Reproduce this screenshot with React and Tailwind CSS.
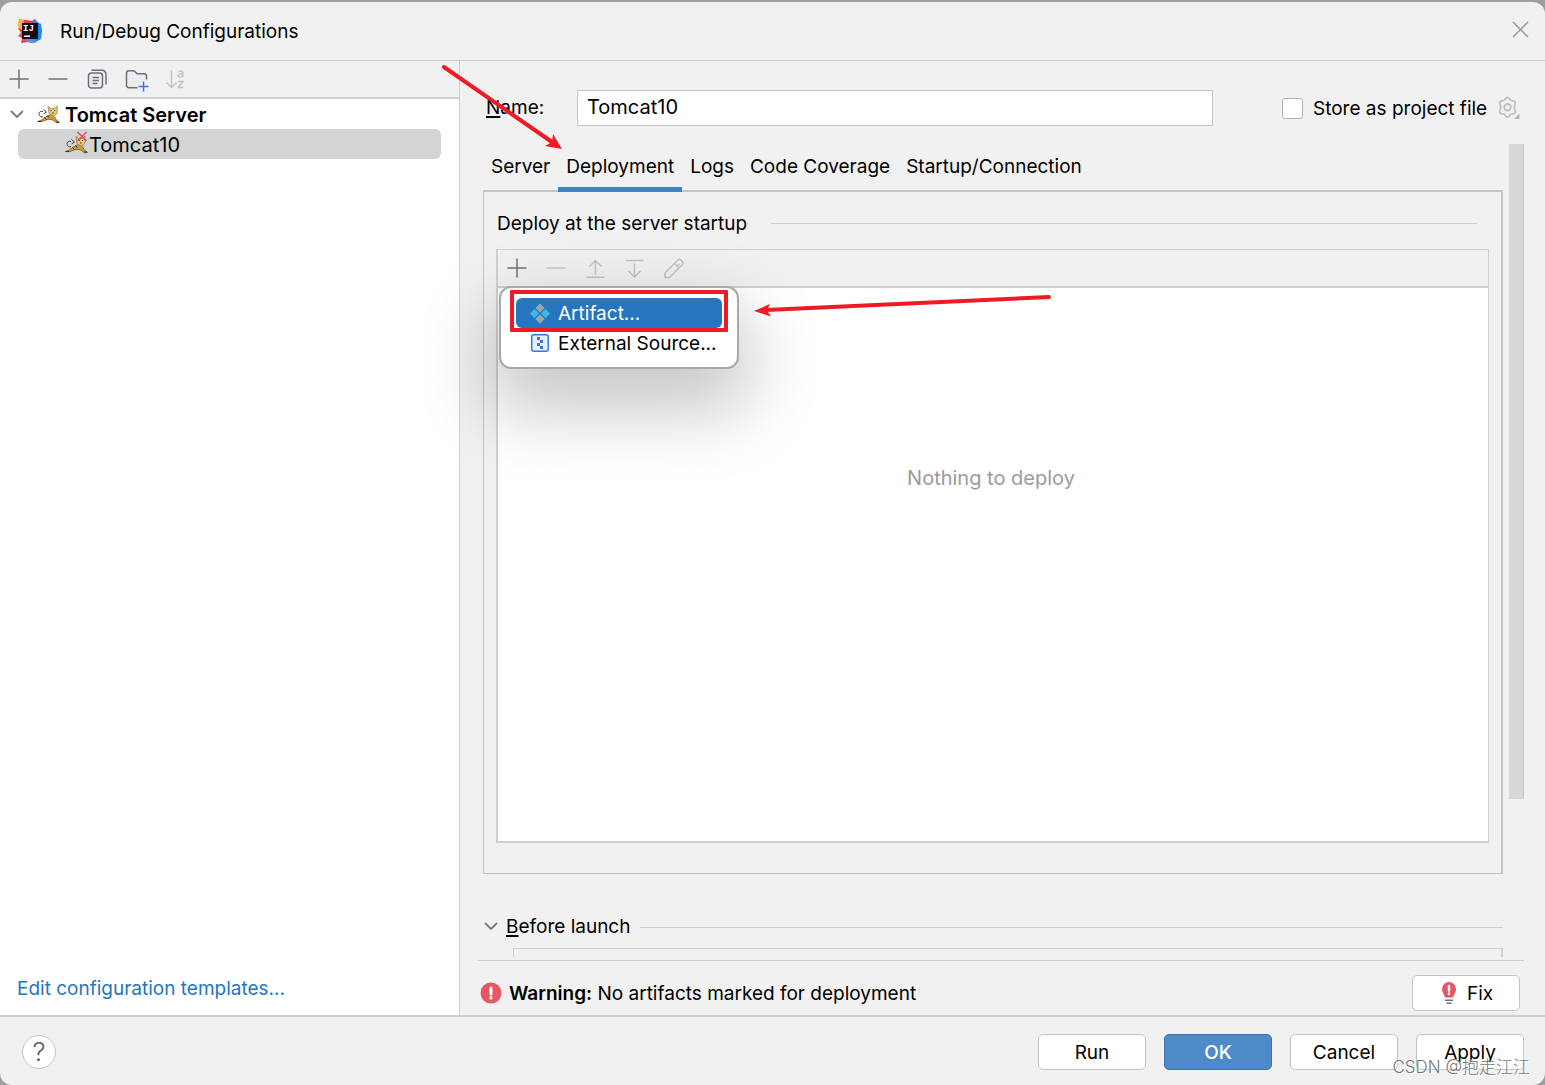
import React, { useState } from 'react'

function Icon({ children, className = '' }) {
  return (
    <svg width="24" height="24" viewBox="0 0 24 24" fill="none" stroke="currentColor" strokeWidth="1.5" className={`shrink-0 ${className}`} aria-hidden="true">
      {children}
    </svg>
  )
}

function PlusIcon() {
  return <Icon><path d="M12 2.5v19M2.5 12h19" /></Icon>
}

function MinusIcon() {
  return <Icon><path d="M2.5 12h19" /></Icon>
}

function CopyIcon() {
  return (
    <Icon>
      <rect x="3.5" y="6" width="14" height="15" rx="3" fill="#ebecf0" />
      <path d="M6.5 3.2h10.5a4 4 0 0 1 4 4v10.3M7.5 10.5h6.5M7.5 13.5h6.5M7.5 16.5h5" />
    </Icon>
  )
}

function FolderIcon() {
  return (
    <Icon className="overflow-visible">
      <path d="M13.5 20.7H4.8a2.3 2.3 0 0 1-2.3-2.3V6a2.3 2.3 0 0 1 2.3-2.3h4.4c.7 0 1.3.3 1.8.8l2 2.2h7.2a2.3 2.3 0 0 1 2.3 2.3v3.5" fill="#ebecf0" stroke="none" />
      <path d="M13.5 20.7H4.8a2.3 2.3 0 0 1-2.3-2.3V6a2.3 2.3 0 0 1 2.3-2.3h4.4c.7 0 1.3.3 1.8.8l2 2.2h7.2a2.3 2.3 0 0 1 2.3 2.3v3.5" />
      <path d="M19.5 14.5v10M14.5 19.5h10" stroke="#3574f0" />
    </Icon>
  )
}

function SortIcon() {
  return (
    <Icon className="overflow-visible">
      <path d="M8.5 3.500v17M3.500 15.500l5 5 5-5" />
      <path d="M15.500 4.800c.8-1.200 4.300-1.300 4.300.8v4.700M19.800 6.800c-2.500 0-4.500.3-4.500 1.900 0 2 3.700 1.800 4.500 0M15.300 14.500h4.700l-4.700 6h5" />
    </Icon>
  )
}

function TomcatIcon({ broken }) {
  return (
    <Icon className="overflow-visible">
      <path d="M7 8.500C4 7.500 2 10 3.500 12.500c.8 1.200 2 1.500 3.500 1.200M7.500 6.500l3 2.500-3 2" stroke="#444" strokeWidth="1" />
      <path d="M1.500 18.500l4-1.500 3-2.500 4-2 3-1.500 3.500 3.500 1 2 3.500 3-3 .3-3.500-2.800-4-.8-3.500 1-4 1.500z" fill="#cfa033" stroke="#5b4820" strokeWidth=".7" />
      <path d="M12 3.500l2.500 2h3.500l3-2.500.3 6-1.300 2.500-3 1.500-3.800-2z" fill="#e6c878" stroke="#8b7440" strokeWidth=".7" />
      <path d="M14.500 7.500h1M18 7.500h1M16 10h1.500M8.500 14.500l2 2M11.500 12.500l1.500 2M2 18.500h3M20 19h3" stroke="#3d3017" strokeWidth="1" />
      {broken && <path d="M13.500-1l9 9M22.500-1l-9 9" stroke="#e8475a" strokeWidth="1.500" />}
    </Icon>
  )
}

function ChevronIcon() {
  return (
    <svg width="14" height="24" viewBox="0 0 14 24" fill="none" stroke="#7a7a7a" strokeWidth="1.8" className="shrink-0" aria-hidden="true">
      <path d="M1 8l6 6 6-6" />
    </svg>
  )
}

function GearIcon() {
  return (
    <Icon className="text-[#c0c0c0]">
      <path d="M9.300 3.200Q11.500-.5 13.700 3.200Q14.500 4.800 16.400 4.800Q20.500 4.800 18.800 8.300Q17.900 11.300 18.800 14.200Q20.500 17.800 16.400 17.800Q14.500 17.800 13.700 19.400Q11.500 23 9.300 19.400Q8.500 17.800 6.600 17.800Q2.500 17.800 4.200 14.200Q5.100 11.300 4.200 8.300Q2.500 4.800 6.600 4.800Q8.500 4.800 9.300 3.200z" strokeWidth="1.8" />
      <circle cx="11.500" cy="11.300" r="3.300" strokeWidth="1.8" />
      <path d="M23.500 17.500v5.500H18z" fill="#b8b8b8" stroke="none" />
    </Icon>
  )
}

function LogoIcon() {
  return (
    <Icon>
      <g stroke="none">
        <path d="M1 0l11 1-2 11L1 11 0 6z" fill="#fcb13a" />
        <path d="M6 1l8 1 3-2 3 4-6 9-9-1z" fill="#fb2d6c" />
        <path d="M16 0l3 3 4 2 1 7-1 8-7 4-7-1 4-9z" fill="#148cf0" />
        <path d="M0 9l6 2 5 8-1 4-7 1 1-5-4-2 3-3z" fill="#fb3b55" />
        <path d="M9 18l6-1 2 6-4 1-5-2z" fill="#5b8df5" />
        <rect x="4" y="4" width="16" height="16" fill="#160b10" />
        <text x="5" y="11.500" fill="#fff" fontSize="9" fontWeight="700" fontFamily="Liberation Mono, monospace">IJ</text>
        <path d="M6 16.500h6V18H6z" fill="#fff" />
      </g>
    </Icon>
  )
}

function ArtifactIcon() {
  return (
    <Icon>
      <g stroke="none">
        <path d="M12 1.500l4.600 4.600L12 10.700 7.400 6.100zM12 12.500l4.600 4.600L12 21.700l-4.600-4.600z" fill="#9aa7b0" />
        <path d="M6.500 7l4.600 4.600-4.600 4.600-4.600-4.600zM17.500 7l4.600 4.600-4.600 4.600-4.600-4.600z" fill="#40b6e0" />
      </g>
    </Icon>
  )
}

function ExternalIcon() {
  return (
    <Icon className="text-[#3574f0]">
      <rect x="3.700" y="2.700" width="16.500" height="16.500" rx="2" fill="#e7effd" />
      <path d="M9 5h3v3H9zM12 8h3v3h-3zM9 11h3v3H9zM12 14h3v3h-3z" fill="currentColor" stroke="none" />
    </Icon>
  )
}

function ToolButton({ label, children, dim }) {
  return (
    <button type="button" aria-label={label} className={dim ? 'text-[#c4c4c4]' : 'text-[#6c707e]'}>
      {children}
    </button>
  )
}

function DialogButton({ children, primary }) {
  return (
    <button
      type="button"
      className={`h-9 w-[108px] rounded-[5px] border pt-0.5 ${primary ? 'border-[#3d75b3] bg-[#4e8ac8] font-medium text-white' : 'border-[#c4c4c4] bg-white'}`}
    >
      {children}
    </button>
  )
}

const tabs = ['Server', 'Deployment', 'Logs', 'Code Coverage', 'Startup/Connection']

function Sidebar() {
  return (
    <aside className="flex w-[460px] shrink-0 flex-col border-r border-[#d0d0d0] bg-white">
      <div className="flex h-[38px] shrink-0 items-center gap-[15px] border-b-2 border-[#d0d0d0] bg-[#f1f1f1] px-[7px]">
        <ToolButton label="Add"><PlusIcon /></ToolButton>
        <ToolButton label="Remove"><MinusIcon /></ToolButton>
        <ToolButton label="Copy"><CopyIcon /></ToolButton>
        <ToolButton label="New folder"><FolderIcon /></ToolButton>
        <ToolButton label="Sort" dim><SortIcon /></ToolButton>
      </div>
      <ul className="flex-1 text-xl leading-6">
        <li>
          <div className="flex h-[30px] items-center pl-2.5 pt-0.5 font-semibold">
            <ChevronIcon />
            <span className="ml-3 mr-[5px] flex"><TomcatIcon /></span>
            Tomcat Server
          </div>
          <ul>
            <li className="ml-[18px] mr-[18px] flex h-[30px] items-center rounded-md bg-[#d4d4d4] pl-[46px] pt-0.5">
              <TomcatIcon broken />
              <span className="ml-px">Tomcat10</span>
            </li>
          </ul>
        </li>
      </ul>
      <a href="#templates" className="mb-3.5 ml-[17px] text-[#2675bf]">Edit configuration templates...</a>
    </aside>
  )
}

function DeployMenu() {
  return (
    <ul role="menu" className="absolute left-px top-9 z-10 w-60 rounded-xl border-2 border-[#a9a9a9] bg-white px-[15px] pb-[9px] pt-2.5 shadow-[0_32px_70px_10px_rgba(0,0,0,0.22)]">
      <li className="relative">
        <button type="button" role="menuitem" className="flex h-[30px] w-[206px] items-center gap-1.5 rounded-md bg-[#2675bf] pl-3 pt-0.5 text-white">
          <ArtifactIcon />
          Artifact...
        </button>
        <div className="pointer-events-none absolute -left-1.5 -top-2 h-[42px] w-[218px] rounded-[1px] border-4 border-[#ed1c24]" />
      </li>
      <li>
        <button type="button" role="menuitem" className="flex h-[30px] items-center gap-1.5 whitespace-nowrap pl-3 pt-0.5">
          <ExternalIcon />
          External Source...
        </button>
      </li>
    </ul>
  )
}

function DeployPanel() {
  return (
    <section className="flex h-[684px] shrink-0 flex-col border border-r-2 border-t-2 border-[#c4c4c4] pb-[30px] pl-3 pr-3">
      <div className="flex h-[57px] items-center gap-6 pl-px pr-3 pt-1.5">
        <h2>Deploy at the server startup</h2>
        <div className="h-px flex-1 bg-[#d0d0d0]" />
      </div>
      <div className="flex flex-1 flex-col border border-b-2 border-l-2 border-[#d0d0d0]">
        <div className="relative flex h-[38px] items-center gap-[15px] border-b-2 border-[#d0d0d0] px-[7px]">
          <ToolButton label="Add artifact"><PlusIcon /></ToolButton>
          <ToolButton label="Remove artifact" dim><MinusIcon /></ToolButton>
          <ToolButton label="Move up" dim>
            <Icon><path d="M12.500 18.500v-14M6.500 10.500l6-6 6 6M3.500 21.300h18" /></Icon>
          </ToolButton>
          <ToolButton label="Move down" dim>
            <Icon><path d="M12.500 7.500v13.500M6.500 15l6 6 6-6M3.500 4.500h18" /></Icon>
          </ToolButton>
          <ToolButton label="Edit" dim>
            <Icon><path d="M4 21.500v-4.500L17 4a2 2 0 0 1 2.800 0l1.700 1.700a2 2 0 0 1 0 2.800L8.500 21.500zM13.500 7.500l4.500 4.500M16.500 10l2-2" /></Icon>
          </ToolButton>
          <DeployMenu />
        </div>
        <div className="flex-1 bg-white pr-1 pt-[178px] text-center text-xl leading-6 text-[#9b9b9b]">Nothing to deploy</div>
      </div>
    </section>
  )
}

function Editor() {
  const [name, setName] = useState('Tomcat10')
  const [tab, setTab] = useState('Deployment')
  return (
    <main className="flex min-w-0 flex-1 flex-col pl-[18px] pr-[21px]">
      <div className="flex shrink-0 items-center pl-2 pt-[29px]">
        <label htmlFor="name" className="w-[91px]"><span className="underline decoration-2 underline-offset-2">N</span>ame:</label>
        <input id="name" value={name} onChange={(e) => setName(e.target.value)} className="h-9 min-w-0 flex-1 border border-[#c4c4c4] bg-white px-[9px] pb-0.5 text-xl leading-6 outline-none" />
        <input id="store" type="checkbox" className="ml-[69px] size-[21px] appearance-none rounded-[3px] border border-[#b0b0b0] bg-white" />
        <label htmlFor="store" className="ml-2.5 mr-[5px] w-[178px] whitespace-nowrap pt-0.5">Store as project file</label>
        <button type="button" aria-label="Storage options" className="mr-1"><GearIcon /></button>
      </div>
      <div className="mt-[18px] flex min-h-0 flex-1 gap-1.5 overflow-x-visible overflow-y-clip">
        <div className="flex min-w-0 flex-1 flex-col pl-[5px]">
          <div role="tablist" className="relative z-10 -mb-0.5 flex h-12 shrink-0">
            {tabs.map((t) => (
              <button
                key={t}
                type="button"
                role="tab"
                aria-selected={tab === t}
                onClick={() => setTab(t)}
                className={`whitespace-nowrap border-b-[5px] px-2 pt-0.5 ${tab === t ? 'border-[#3d82c8]' : 'border-transparent'}`}
              >
                {t}
              </button>
            ))}
          </div>
          <DeployPanel />
          <div className="flex shrink-0 items-center pl-px pt-[41px]">
            <ChevronIcon />
            <h2 className="ml-2 mr-2.5"><span className="underline decoration-2 underline-offset-2">B</span>efore launch</h2>
            <div className="h-px flex-1 bg-[#d0d0d0]" />
          </div>
          <div className="ml-[30px] mt-[9px] h-[9px] shrink-0 border border-b-0 border-r-2 border-[#d0d0d0]" />
        </div>
        <div className="h-[655px] w-[15px] shrink-0 border-r border-[#c4c4c4] bg-[#d8d8d8]" />
      </div>
      <div className="flex h-[55px] shrink-0 items-center border-t border-[#d0d0d0] pl-0.5 pr-1 pt-2.5">
        <svg width="22" height="22" viewBox="0 0 22 22" aria-hidden="true">
          <circle cx="11" cy="11" r="10.500" fill="#e55765" />
          <path d="M11 6v6M11 15.500v.5" stroke="#fff" strokeWidth="3" strokeLinecap="round" />
        </svg>
        <p className="ml-[7px] flex-1 pt-0.5"><b className="font-semibold">Warning:</b> No artifacts marked for deployment</p>
        <button type="button" className="flex h-9 w-[108px] items-center gap-1.5 rounded-[5px] border border-[#c4c4c4] bg-white pl-6 pt-0.5">
          <Icon>
            <g stroke="none">
              <path d="M12 0a7 7 0 0 1 7 7c0 3.500-2 5-3 8.500H8C7 12 5 10.500 5 7a7 7 0 0 1 7-7z" fill="#e55765" />
              <path d="M8 17.500h8V19H8zM9.500 20.500h5V22h-5z" fill="#6c707e" />
            </g>
            <path d="M12 4v4.500M12 11.500v.5" stroke="#fff" strokeWidth="2.500" strokeLinecap="round" />
          </Icon>
          Fix
        </button>
      </div>
    </main>
  )
}

export default function App() {
  return (
    <div className="relative flex h-screen min-h-[700px] flex-col overflow-hidden bg-[#9e9e9e] pt-0.5 font-['Inter','Noto_Sans_CJK_SC',sans-serif] text-[19px] leading-6 text-black">
      <div className="flex min-h-0 flex-1 flex-col overflow-hidden rounded-xl bg-[#f1f1f1]">
        <header className="flex h-[59px] shrink-0 items-center border-b border-[#d0d0d0] pl-[18px] pr-4">
          <LogoIcon />
          <h1 className="ml-[18px] flex-1 pt-0.5">Run/Debug Configurations</h1>
          <button type="button" aria-label="Close" className="pb-1 text-[#999]">
            <svg width="17" height="17" viewBox="0 0 17 17" stroke="currentColor" strokeWidth="1.500"><path d="M1 1l15 15M16 1L1 16" /></svg>
          </button>
        </header>
        <div className="flex min-h-0 flex-1">
          <Sidebar />
          <Editor />
        </div>
        <footer className="flex h-[70px] shrink-0 items-center gap-[18px] border-t-2 border-[#d0d0d0] pl-[22px] pr-[21px] pt-px">
          <button type="button" aria-label="Help" className="mr-auto size-[34px] rounded-full border border-[#c4c4c4] bg-white text-[26px] font-light leading-6 text-[#5a5d6b]">?</button>
          <DialogButton>Run</DialogButton>
          <DialogButton primary>OK</DialogButton>
          <DialogButton>Cancel</DialogButton>
          <DialogButton>Apply</DialogButton>
        </footer>
      </div>

      {/* annotation arrows */}
      <svg className="pointer-events-none absolute left-0 top-0 z-20" width="1060" height="330" fill="#ed1c24" stroke="#ed1c24" strokeWidth="4" strokeLinecap="round" aria-hidden="true">
        <path d="M444 67l108 75M1049 297l-283 13" />
        <path d="M562 149l-17-3 7-4 1-8z" stroke="none" />
        <path d="M754 311l16-7-3 6.500 4 6z" stroke="none" />
      </svg>
      <div className="pointer-events-none absolute bottom-1.5 right-[15px] text-[17px] font-light text-[#777] [text-shadow:1px_1px_0_#fff]">CSDN @抱走江江</div>
    </div>
  )
}
